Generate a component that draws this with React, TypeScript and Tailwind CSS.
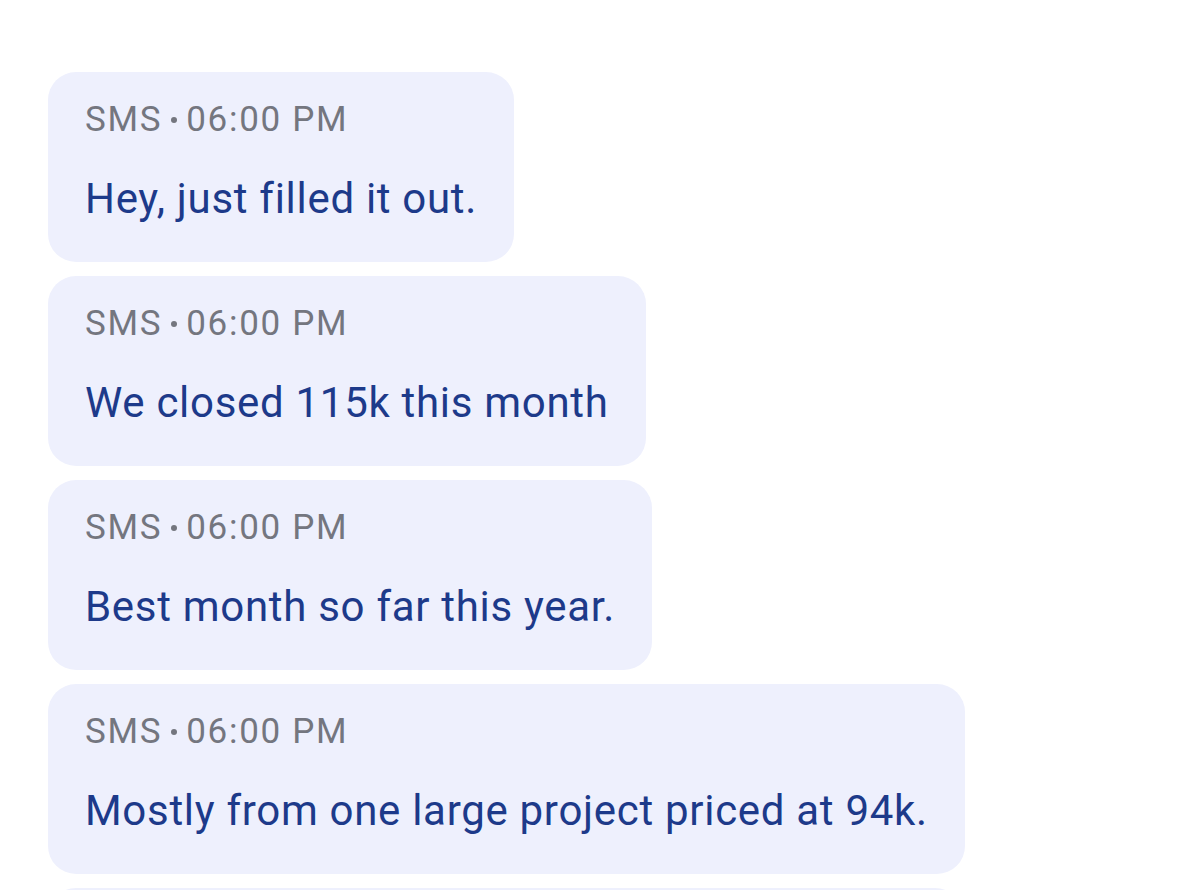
const messages = [
  "Hey, just filled it out.",
  "We closed 115k this month",
  "Best month so far this year.",
  "Mostly from one large project priced at 94k.",
];

export default function App() {
  return (
    <div
      className="bg-white pt-[72px] px-[48px] overflow-hidden h-[890px]"
      style={{ fontFamily: "Roboto, 'Noto Sans', sans-serif" }}
    >
      <div className="flex flex-col items-start gap-[14px]">
        {messages.map((text, i) => (
          <div
            key={i}
            className="bg-[#eef0fd] rounded-[28px] pl-[37px] pr-[37px] pt-[26px] pb-[38px]"
          >
            <div className="flex items-center text-[35px] leading-[44px] text-[#74767f] tracking-[1.7px]">
              <span>SMS</span>
              <span className="mx-[9px] w-[6px] h-[6px] rounded-full bg-[#74767f]" />
              <span>06:00 PM</span>
            </div>
            <p className="mt-[32px] text-[42px] leading-[50px] text-[#1d3a8a] tracking-[0.7px] whitespace-nowrap">
              {text}
            </p>
          </div>
        ))}
        {/* next bubble, scrolled just past the bottom edge */}
        <div className="bg-[#eef0fd] rounded-[28px] w-[915px] h-[190px] shrink-0" />
      </div>
    </div>
  );
}
